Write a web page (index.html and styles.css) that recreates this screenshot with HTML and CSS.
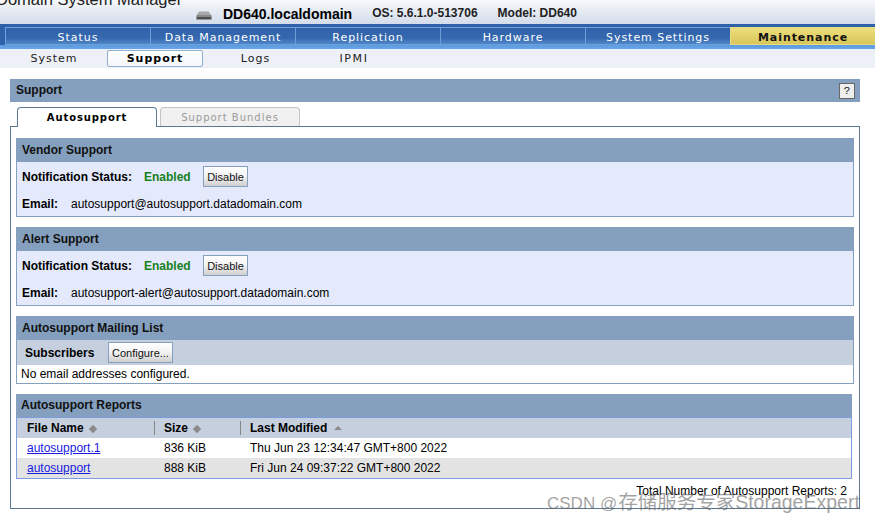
FILE: index.html
```html
<!DOCTYPE html>
<html>
<head>
  <meta charset="UTF-8">
  <title>Data Domain System Manager</title>
  <link rel="stylesheet" href="styles.css">
</head>
<body>

  <div class="header">
    <div class="app-title">Domain System Manager</div>
    <div class="system-info">
      <svg class="disk-icon" width="16" height="9" viewBox="0 0 16 9">
        <path d="M3 0.5H12.5L15.5 4.5H0.5Z" fill="#a8a8a8"/>
        <rect x="0.5" y="4.5" width="15" height="4" fill="#4e4e4e"/>
        <rect x="1" y="5" width="14" height="1" fill="#8a8a8a"/>
      </svg>
      <span class="host">DD640.localdomain</span>
      <span class="os">OS: 5.6.1.0-513706</span>
      <span class="model">Model: DD640</span>
    </div>
  </div>

  <div class="navbar">
    <div class="nav-item">Status</div>
    <div class="nav-item">Data Management</div>
    <div class="nav-item">Replication</div>
    <div class="nav-item">Hardware</div>
    <div class="nav-item">System Settings</div>
    <div class="nav-item nav-active">Maintenance</div>
  </div>

  <div class="subnav">
    <div class="sub-item sub-system">System</div>
    <div class="sub-item sub-support">Support</div>
    <div class="sub-item sub-logs">Logs</div>
    <div class="sub-item sub-ipmi">IPMI</div>
  </div>

  <div class="content">
    <div class="page-title">
      <span class="page-name">Support</span>
      <span class="help-btn">?</span>
    </div>

    <div class="tabs">
      <div class="tab tab-active">Autosupport</div>
      <div class="tab">Support Bundles</div>
    </div>

    <div class="tab-box">

      <!-- Vendor Support -->
      <div class="panel">
        <div class="panel-title">Vendor Support</div>
        <div class="panel-body">
          <div class="status-row">
            <b class="label">Notification Status:</b>
            <span class="enabled">Enabled</span>
            <button class="btn">Disable</button>
          </div>
          <div class="email-row">
            <b class="email-label">Email:</b>
            <span>autosupport@autosupport.datadomain.com</span>
          </div>
        </div>
      </div>

      <!-- Alert Support -->
      <div class="panel">
        <div class="panel-title">Alert Support</div>
        <div class="panel-body">
          <div class="status-row">
            <b class="label">Notification Status:</b>
            <span class="enabled">Enabled</span>
            <button class="btn">Disable</button>
          </div>
          <div class="email-row">
            <b class="email-label">Email:</b>
            <span>autosupport-alert@autosupport.datadomain.com</span>
          </div>
        </div>
      </div>

      <!-- Mailing List -->
      <div class="panel panel-list">
        <div class="panel-title">Autosupport Mailing List</div>
        <div class="list-head">
          <b>Subscribers</b>
          <button class="btn btn-configure">Configure...</button>
        </div>
        <div class="list-empty">No email addresses configured.</div>
      </div>

      <!-- Reports -->
      <div class="reports">
        <div class="panel-title reports-title">Autosupport Reports</div>
        <table class="reports-table">
          <thead>
            <tr>
              <th class="col-name"><span class="th-cell">File Name <i class="sort-diamond"></i></span></th>
              <th class="col-size"><span class="th-cell th-sep">Size <i class="sort-diamond"></i></span></th>
              <th><span class="th-cell th-sep">Last Modified <i class="sort-up"></i></span></th>
            </tr>
          </thead>
          <tbody>
            <tr>
              <td class="col-name"><a href="#">autosupport.1</a></td>
              <td class="col-size">836 KiB</td>
              <td>Thu Jun 23 12:34:47 GMT+800 2022</td>
            </tr>
            <tr class="row-alt">
              <td class="col-name"><a href="#">autosupport</a></td>
              <td class="col-size">888 KiB</td>
              <td>Fri Jun 24 09:37:22 GMT+800 2022</td>
            </tr>
          </tbody>
        </table>
      </div>

      <div class="total">Total Number of Autosupport Reports: 2</div>
    </div>
  </div>

  <div class="watermark">CSDN @<span class="wm-big">存储服务专家StorageExpert</span></div>

</body>
</html>
```

FILE: styles.css
```css
html, body {
  margin: 0;
  padding: 0;
}
body {
  position: relative;
  width: 875px;
  height: 522px;
  overflow: hidden;
  background: #fff;
  color: #000;
  font-family: "Liberation Sans", Arial, sans-serif;
  font-size: 12px;
}

/* top header */
.header {
  height: 24px;
  overflow: hidden;
  display: flex;
  background: linear-gradient(#f6f8fb, #d3dcea);
}
.app-title {
  width: 196px;
  flex: none;
  margin-top: -11px;
  text-indent: -4px;
  font-size: 16.5px;
  line-height: 20px;
  white-space: nowrap;
  color: #222;
}
.system-info {
  display: flex;
  align-items: center;
  height: 24px;
  padding-top: 3px;
  box-sizing: border-box;
}
.disk-icon {
  margin-top: 3px;
  margin-right: 11px;
}
.host {
  font-size: 14px;
  font-weight: bold;
  margin-right: 20px;
}
.os, .model {
  font-size: 12px;
  font-weight: bold;
  position: relative;
  top: -1px;
  color: #222;
}
.os {
  margin-right: 20px;
}

/* main nav */
.navbar {
  height: 25px;
  box-sizing: border-box;
  padding: 3px 0 4px 5px;
  display: flex;
  background: linear-gradient(#2f61a8 0, #2f61a8 21px, #5b9be0 21px, #6aa5e6 100%);
}
.nav-item {
  width: 145px;
  box-sizing: border-box;
  border: 1px solid #6f9fd8;
  border-right: 0;
  line-height: 19px;
  text-align: center;
  font-family: "DejaVu Sans", Verdana, sans-serif;
  font-size: 11px;
  letter-spacing: 0.95px;
  color: #fff;
  background: linear-gradient(#2f62aa, #3467ae 60%, #4f86c8);
}
.nav-active {
  border-color: #e8dc80;
  font-weight: bold;
  color: #111;
  background: linear-gradient(#ecdf7c, #d9c55a);
}

/* sub nav */
.subnav {
  height: 19px;
  display: flex;
  align-items: center;
  background: #edf0f6;
  font-family: "DejaVu Sans", Verdana, sans-serif;
  font-size: 11px;
  letter-spacing: 1px;
  color: #222;
}
.sub-item {
  text-align: center;
}
.sub-system {
  width: 108px;
}
.sub-support {
  width: 94px;
  height: 15px;
  margin-left: -1px;
  line-height: 15px;
  border: 1px solid #8fb0d0;
  border-radius: 2px;
  font-weight: bold;
  color: #000;
  background: linear-gradient(#fff, #f4f6fa);
}
.sub-logs {
  width: 105px;
}
.sub-ipmi {
  width: 92px;
  letter-spacing: 1.6px;
}

/* content */
.content {
  padding: 11px 15px 0 10px;
}
.page-title {
  height: 23px;
  display: flex;
  justify-content: space-between;
  align-items: center;
  padding: 0 5px 0 6px;
  background: #85a0be;
  font-weight: bold;
  color: #111;
}
.page-name {
  position: relative;
  top: -1px;
}
.help-btn {
  width: 14px;
  height: 14px;
  border: 1px solid #666;
  background: #eee;
  font-size: 11px;
  font-weight: normal;
  line-height: 14px;
  text-align: center;
  font-family: "Liberation Mono", monospace;
}

/* tabs */
.tabs {
  display: flex;
  gap: 3px;
  margin-top: 5px;
  padding-left: 7px;
  height: 19px;
  position: relative;
  z-index: 1;
}
.tab {
  width: 140px;
  height: 19px;
  box-sizing: border-box;
  border: 1px solid #c4c4c4;
  border-bottom: 0;
  border-radius: 4px 4px 0 0;
  background: #f0f0f0;
  line-height: 19px;
  text-align: center;
  font-family: "DejaVu Sans", Verdana, sans-serif;
  font-size: 10px;
  letter-spacing: 1px;
  color: #9a9a9a;
}
.tab-active {
  height: 20px;
  border-color: #5b7892;
  background: #fff;
  font-weight: bold;
  letter-spacing: 0.9px;
  color: #000;
}
.tab-box {
  height: 383px;
  box-sizing: border-box;
  border: 1px solid #5b7892;
  padding: 11px 5px 0 5px;
  position: relative;
}

/* panels */
.panel {
  border: 1px solid #85a0be;
  margin-bottom: 10px;
  background: #e4eafb;
}
.panel-title {
  height: 23px;
  line-height: 23px;
  padding-left: 5px;
  background: #85a0be;
  font-weight: bold;
  color: #111;
}
.panel-body {
  height: 54px;
}
.status-row {
  display: flex;
  align-items: center;
  height: 27px;
  padding: 1px 0 0 5px;
}
.label {
  width: 122px;
}
.enabled {
  width: 59px;
  font-weight: bold;
  color: #17801f;
}
.email-row {
  display: flex;
  align-items: center;
  height: 25px;
  padding: 1px 0 0 5px;
}
.email-label {
  width: 49px;
}
.btn {
  height: 21px;
  box-sizing: border-box;
  padding: 0 3px;
  border: 1px solid #85a0be;
  background: linear-gradient(#fff, #f2f2f2 50%, #cfcfcf);
  font-family: "Liberation Sans", Arial, sans-serif;
  font-size: 11px;
  color: #111;
  width: 45px;
}
.panel-list {
  background: #fff;
}
.list-head {
  height: 25px;
  display: flex;
  align-items: center;
  padding-left: 8px;
  background: #c5cfde;
}
.list-head b {
  width: 83px;
}
.btn-configure {
  width: 65px;
}
.list-empty {
  height: 18px;
  line-height: 18px;
  padding-left: 4px;
}

/* reports table */
.reports {
  margin-right: 2px;
}
.reports-title {
  height: 23px;
  line-height: 22px;
}
.reports-table {
  width: 100%;
  border-collapse: collapse;
  border: 1px solid #7d9ce0;
}
.reports-table th {
  height: 20px;
  padding: 0;
  text-align: left;
  background: #c5cfde;
}
.reports-table td {
  height: 20px;
  padding: 0 0 0 1px;
}
.col-name {
  width: 136px;
  padding-left: 10px !important;
}
.col-size {
  width: 85px;
}
.th-cell {
  display: block;
  height: 14px;
  line-height: 14px;
}
.th-sep {
  border-left: 1px solid #888;
  margin-left: -9px;
  padding-left: 9px;
}
.row-alt td {
  background: #e3e3e3;
}
a {
  color: #1a1ae0;
}
.sort-diamond {
  display: inline-block;
  width: 6px;
  height: 6px;
  margin-left: 3px;
  background: #8a8a8a;
  transform: rotate(45deg);
  vertical-align: 0;
}
.sort-up {
  display: inline-block;
  width: 0;
  height: 0;
  margin-left: 3px;
  border-left: 4px solid transparent;
  border-right: 4px solid transparent;
  border-bottom: 4px solid #8a8a8a;
  vertical-align: 2px;
}
.total {
  margin-top: 5px;
  padding-right: 7px;
  text-align: right;
}

.watermark {
  position: absolute;
  left: 547px;
  top: 491px;
  font-size: 17px;
  line-height: 22px;
  white-space: nowrap;
  color: rgba(100, 100, 100, 0.6);
  font-family: "Liberation Sans", "Noto Sans CJK SC", sans-serif;
}
.wm-big {
  font-size: 19.5px;
  margin-left: 1px;
}
```
